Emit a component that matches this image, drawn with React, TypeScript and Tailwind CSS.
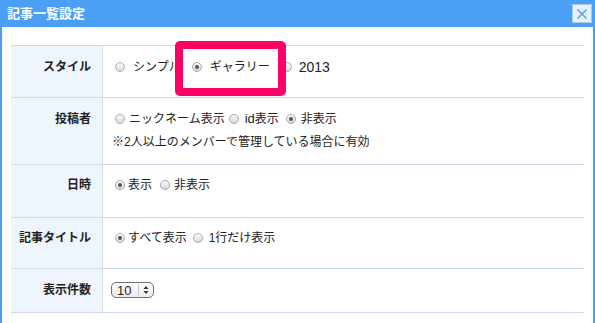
import clsx from 'clsx'
import type { ReactNode } from 'react'

const jp = "font-['Liberation_Sans','Noto_Sans_CJK_JP',sans-serif]"

function Radio({ checked, className }: { checked?: boolean; className?: string }) {
  return (
    <span
      className={clsx(
        'flex h-[10px] w-[10px] shrink-0 items-center justify-center rounded-full border border-[#a8a8a8] bg-gradient-to-b from-[#fbfbfb] to-[#d9d9d9]',
        className,
      )}
    >
      {checked ? <span className="h-[4px] w-[4px] rounded-full bg-[#555]" /> : null}
    </span>
  )
}

function Row({
  label,
  height,
  pad,
  children,
}: {
  label: string
  height: string
  pad: string
  children: ReactNode
}) {
  return (
    <div className={clsx('flex border-b border-[#cbdbeb]', height)}>
      <div
        className={clsx(
          'w-[92px] shrink-0 border-r border-[#cbdbeb] bg-[#eef5fd] pr-[11px] text-right text-[12px] font-bold leading-[16px] text-[#222]',
          pad,
        )}
      >
        {label}
      </div>
      <div className={clsx('flex-1 pl-[12px] text-[12px] leading-[16px] text-[#222]', pad)}>
        {children}
      </div>
    </div>
  )
}

export default function App() {
  return (
    <div className={clsx('relative h-[323px] w-[595px] overflow-hidden bg-[#4b9ff5]', jp)}>
      <div className="flex h-[27px] items-center justify-between pl-[7px] pr-[3px]">
        <span className="text-[13px] font-bold leading-none text-white">記事一覧設定</span>
        <button className="flex h-[19px] w-[20px] items-center justify-center border border-[#a9c9ef] bg-[#e6f1fd]">
          <svg width="12" height="12" viewBox="0 0 12 12">
            <path d="M1.5 1.5 L10.5 10.5 M10.5 1.5 L1.5 10.5" stroke="#4f98ea" strokeWidth="1.3" />
          </svg>
        </button>
      </div>

      <div className="mx-[2px] h-[296px] bg-white pl-[9px] pt-[18px]">
        <div className="w-[573px] border-t border-[#cbdbeb]">
          <Row label="スタイル" height="h-[52px]" pad="pt-[13px]">
            <div className="flex items-center">
              <Radio />
              <span className="ml-[8px]">シンプル</span>
              <Radio checked className="ml-[11px]" />
              <span className="ml-[8px]">ギャラリー</span>
              <Radio className="ml-[12px]" />
              <span className="ml-[7px] text-[14px]">2013</span>
            </div>
          </Row>
          <Row label="投稿者" height="h-[67px]" pad="pt-[13px]">
            <div className="flex items-center">
              <Radio />
              <span className="ml-[4px]">ニックネーム表示</span>
              <Radio className="ml-[4px]" />
              <span className="ml-[6px]">
                <span className="text-[13px]">id</span>表示
              </span>
              <Radio checked className="ml-[7px]" />
              <span className="ml-[5px]">非表示</span>
            </div>
            <p className="-ml-[3px] mt-[7px]">※2人以上のメンバーで管理している場合に有効</p>
          </Row>
          <Row label="日時" height="h-[53px]" pad="pt-[12px]">
            <div className="flex items-center">
              <Radio checked />
              <span className="ml-[3px]">表示</span>
              <Radio className="ml-[8px]" />
              <span className="ml-[4px]">非表示</span>
            </div>
          </Row>
          <Row label="記事タイトル" height="h-[51px]" pad="pt-[12px]">
            <div className="flex items-center">
              <Radio checked />
              <span className="ml-[3px]">すべて表示</span>
              <Radio className="ml-[6px]" />
              <span className="ml-[6px]">1行だけ表示</span>
            </div>
          </Row>
          <Row label="表示件数" height="h-[44px]" pad="pt-[13px]">
            <div className="-ml-[4px] flex h-[16px] w-[43px] items-center rounded-[5px] border border-[#6f6f6f] bg-gradient-to-b from-white to-[#ececec] text-[13px] leading-none">
              <span className="ml-[5px] w-[21px]">10</span>
              <span className="h-[12px] border-l border-[#c8c8c8]" />
              <svg className="ml-[4px]" width="6" height="10" viewBox="0 0 6 10">
                <path d="M3 1 L5.5 4 L0.5 4 Z M3 9 L5.5 6 L0.5 6 Z" fill="#333" />
              </svg>
            </div>
          </Row>
        </div>
      </div>

      <div className="absolute left-[175px] top-[41px] h-[55px] w-[111px] rounded-[5px] border-[8px] border-[#ff0066]" />
    </div>
  )
}
